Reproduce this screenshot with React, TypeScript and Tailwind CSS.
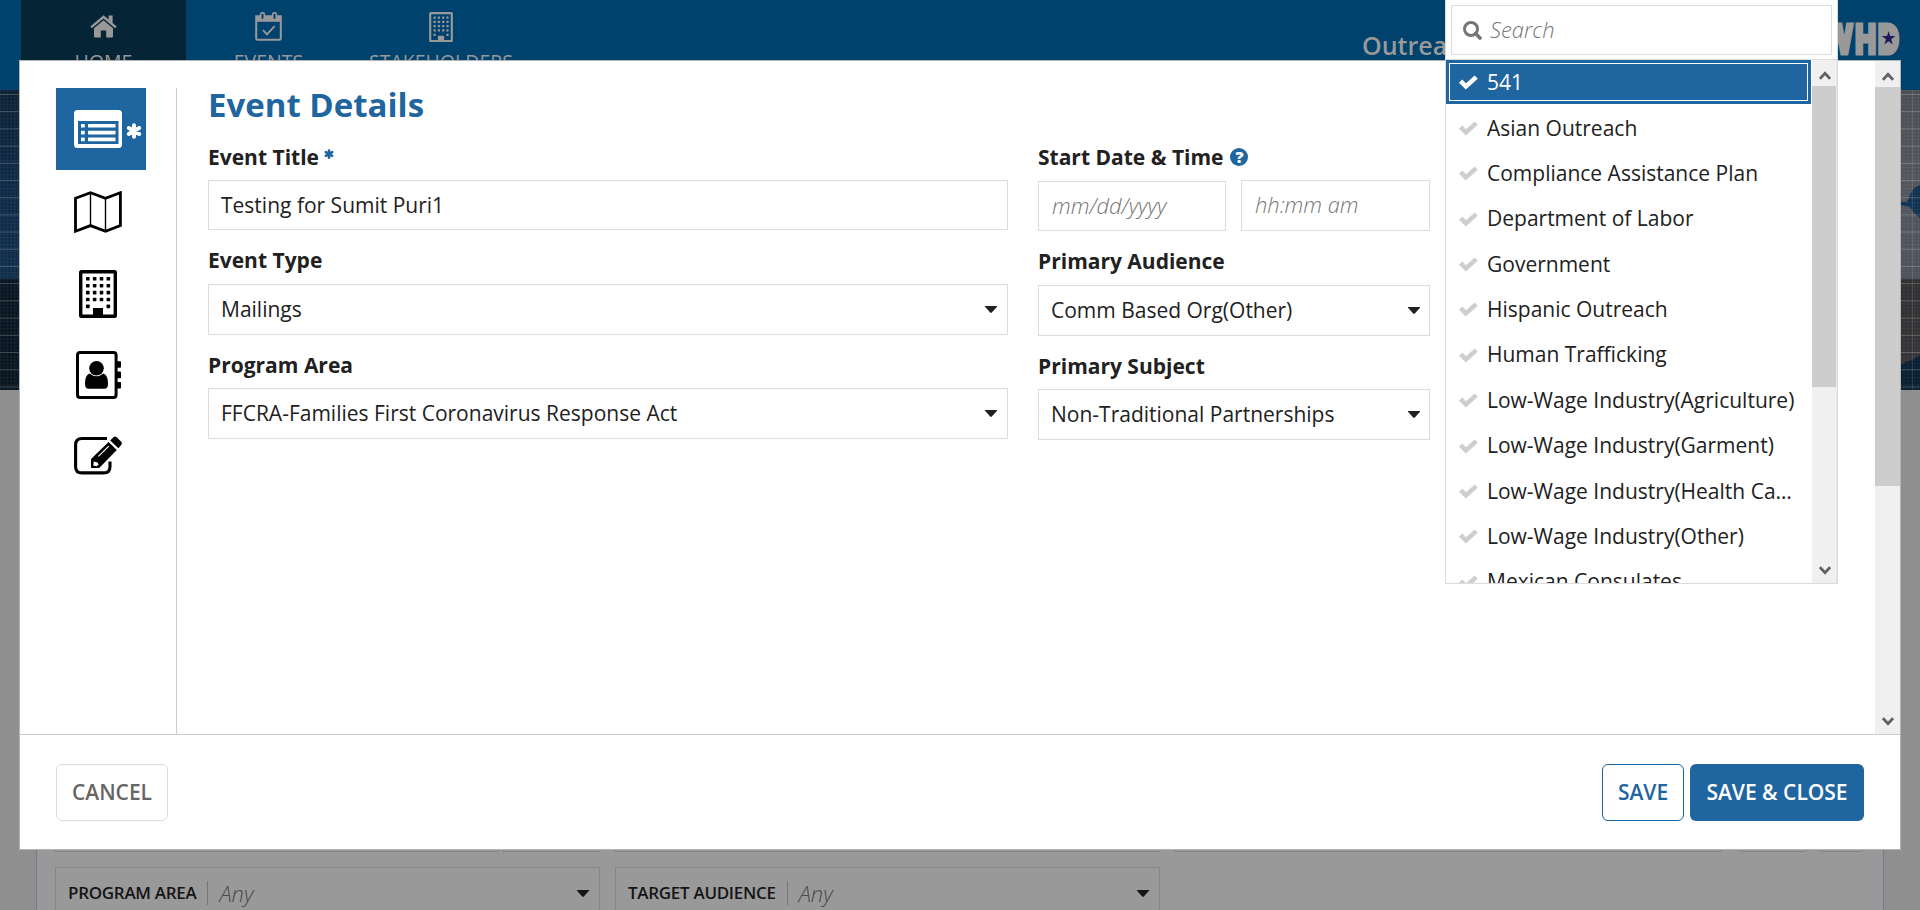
import React from "react";

const options = [
  "541",
  "Asian Outreach",
  "Compliance Assistance Plan",
  "Department of Labor",
  "Government",
  "Hispanic Outreach",
  "Human Trafficking",
  "Low-Wage Industry(Agriculture)",
  "Low-Wage Industry(Garment)",
  "Low-Wage Industry(Health Care)",
  "Low-Wage Industry(Other)",
  "Mexican Consulates",
];

function BuildingIcon({ className }: { className: string }) {
  const dots: React.ReactNode[] = [];
  for (let r = 0; r < 5; r++) {
    for (let c = 0; c < 4; c++) {
      if (r === 4 && (c === 1 || c === 2)) continue;
      dots.push(<rect key={`${r}-${c}`} x={7 + c * 6.85} y={7 + r * 6.9} width="3.6" height="3.6" rx="0.7" />);
    }
  }
  return (
    <svg viewBox="0 0 38 48" className={className} fill="currentColor">
      <rect x="1.7" y="1.7" width="34.6" height="44.6" rx="0.8" fill="none" stroke="currentColor" strokeWidth="3.4" />
      {dots}
      <rect x="14" y="38" width="10" height="9" />
    </svg>
  );
}

function HomeIcon() {
  return (
    <svg viewBox="0 0 27 23" className="h-[23px] w-[27px]" fill="currentColor">
      <path d="M13.5 0.2 0.3 11.4 1.9 13.2 13.5 3.6 25.1 13.2 26.7 11.4 22.6 7.9V0.6H18.6V4.5Z" />
      <path d="M13.5 5.3 4 13.2V21.2Q4 22.4 5.2 22.4H10.8V15.4H16.2V22.4H21.8Q23 22.4 23 21.2V13.2Z" />
    </svg>
  );
}

function CalendarIcon() {
  return (
    <svg viewBox="0 0 27 29" className="h-[29px] w-[27px]" fill="none" stroke="currentColor">
      <path d="M1.2 4.2H25.8V26.6Q25.8 27.8 24.6 27.8H2.4Q1.2 27.8 1.2 26.6Z" strokeWidth="2" />
      <path d="M1.2 4.2H25.8V9.8H1.2Z" fill="currentColor" stroke="none" />
      <rect x="5.7" y="0.9" width="3.6" height="6.8" rx="1.6" strokeWidth="1.6" fill="#00426e" />
      <rect x="17.7" y="0.9" width="3.6" height="6.8" rx="1.6" strokeWidth="1.6" fill="#00426e" />
      <path d="M8 18.2 12 22.4 19.6 14.2" strokeWidth="1.8" />
    </svg>
  );
}

function ListIcon() {
  return (
    <svg viewBox="0 0 48 38" className="h-[38px] w-[48px]" fill="currentColor">
      <path
        fillRule="evenodd"
        d="M3.5 0H44.5Q48 0 48 3.5V34.5Q48 38 44.5 38H3.5Q0 38 0 34.5V3.5Q0 0 3.5 0ZM4 11V34H44.5V11Z"
      />
      {[14, 20.8, 27.6].map((y) => (
        <g key={y}>
          <rect x="7" y={y} width="3.8" height="3.6" rx="0.6" />
          <rect x="14" y={y} width="27.5" height="3.6" rx="0.4" />
        </g>
      ))}
    </svg>
  );
}

function Asterisk({ className }: { className: string }) {
  return (
    <svg viewBox="0 0 16 16" className={className} stroke="currentColor" strokeWidth="4" strokeLinecap="round">
      <path d="M8 2.2V13.8M2.8 5 13.2 11M13.2 5 2.8 11" />
    </svg>
  );
}

function MapIcon() {
  return (
    <svg viewBox="0 0 48 42" className="h-[42px] w-[48px]" fill="none" stroke="currentColor">
      <path d="M1.5 7.2 16.5 1.7 31.5 7.2 46.4 1.7V34.6L31.5 40.2 16.5 34.6 1.5 40.2Z" strokeWidth="2.8" />
      <path d="M16.5 2V35M31.5 7V40" strokeWidth="1.4" />
    </svg>
  );
}

function ContactIcon() {
  return (
    <svg viewBox="0 0 46 48" className="h-[48px] w-[46px]" fill="currentColor">
      <rect x="1.5" y="1.5" width="38.6" height="45" rx="2.6" fill="none" stroke="currentColor" strokeWidth="3" />
      <rect x="40" y="10.2" width="5" height="6.6" rx="0.8" />
      <rect x="40" y="20.6" width="5" height="6.6" rx="0.8" />
      <rect x="40" y="31" width="5" height="6.6" rx="0.8" />
      <circle cx="20.5" cy="17.3" r="7.3" />
      <path d="M13.5 22.6Q20.5 28 27.5 22.6 32 24.5 32 32.5 32 37.8 28.5 37.8H12.5Q9 37.8 9 32.5 9 24.5 13.5 22.6Z" />
    </svg>
  );
}

function EditIcon() {
  return (
    <svg viewBox="0 0 48 39" className="h-[39px] w-[48px]" fill="currentColor">
      <path
        d="M33 2.5H8Q1.6 2.5 1.6 9V30.4Q1.6 36.9 8 36.9H29.5Q36 36.9 36 30.4V25.5"
        fill="none"
        stroke="currentColor"
        strokeWidth="3.1"
      />
      <path
        fillRule="evenodd"
        d="M17 32V23L34.6 6 42.8 14 25.2 32ZM19.8 25.4 19.2 29.4 22.4 30.2 24.6 28.8 23.6 26.6 21.6 26ZM24.8 20.8 35.2 10.6 34.4 9.8 24 20Z"
      />
      <path d="M36.2 4.6 39.2 1.4Q40.8-0.2 42.6 1.2L47 5.4Q48.6 7.2 47.2 9L44.4 12.2Z" />
    </svg>
  );
}

function Check({ className }: { className: string }) {
  return (
    <svg viewBox="0 0 19 15" className={"h-[15px] w-[19px] shrink-0 " + className} fill="none" stroke="currentColor">
      <path d="M1.6 6.2 6.9 11.4 17.2 2.1" strokeWidth="4.6" />
    </svg>
  );
}

function Caret({ className = "" }: { className?: string }) {
  return (
    <svg viewBox="0 0 12 7" className={"h-[7px] w-[12px] shrink-0 " + className} fill="currentColor">
      <path d="M0 0H12V0.8L6.6 6.7H5.4L0 0.8Z" />
    </svg>
  );
}

function Chevron({ down = false }: { down?: boolean }) {
  return (
    <svg viewBox="0 0 12 9" className="h-[9px] w-[12px]" fill="none" stroke="#606060" strokeWidth="2.8">
      {down ? <path d="M0.9 1.2 6 6.6 11.1 1.2" /> : <path d="M0.9 7.8 6 2.4 11.1 7.8" />}
    </svg>
  );
}

function Select({ value, className }: { value: string; className: string }) {
  return (
    <div className={"flex items-center justify-between border border-[#dcdcdc] pl-3 " + className}>
      <span>{value}</span>
      <Caret />
    </div>
  );
}

function Label({ children, className = "h-[38px]" }: { children: React.ReactNode; className?: string }) {
  return <div className={"flex font-bold leading-[30px] text-[#212121] " + className}>{children}</div>;
}

function Filter({ label }: { label: string }) {
  return (
    <div className="flex h-[52px] w-[545px] shrink-0 items-center border border-[#868686] pl-3 pr-[10px] text-[#151515]">
      <span className="text-[17px] font-semibold tracking-[-0.3px]">{label}</span>
      <span className="ml-[11px] h-[24px] border-l border-[#777]" />
      <span className="ml-[11px] text-[22px] font-light italic text-[#4a4a4a]">Any</span>
      <Caret className="ml-auto" />
    </div>
  );
}

function Backdrop() {
  return (
    <div className="flex h-[910px] w-full flex-col overflow-hidden bg-[#8f8f8f]">
      <header className="flex h-[90px] shrink-0 bg-[#00426e] pl-[21px] text-[19.5px] text-[#999]">
        <div className="flex w-[165px] flex-col items-center bg-[#052435] pt-[15px]">
          <HomeIcon />
          <span className="mt-[10px] leading-[28px]">HOME</span>
        </div>
        <div className="flex w-[165px] flex-col items-center pt-3">
          <CalendarIcon />
          <span className="mt-[7px] leading-[28px]">EVENTS</span>
        </div>
        <div className="flex w-[180px] flex-col items-center pt-3">
          <BuildingIcon className="h-[30px] w-[24px]" />
          <span className="mt-[6px] leading-[28px]">STAKEHOLDERS</span>
        </div>
        <div className="ml-auto flex pr-5 pt-[21px]">
          <span className="w-[467px] whitespace-nowrap pt-2 text-[25px] font-semibold leading-[33px]">Outreach</span>
          <svg viewBox="0 0 71 36" className="h-[36px] w-[71px]">
            <text
              transform="scale(0.7 1)"
              x="-6 37.5 70"
              y="32"
              fill="#999"
              stroke="#999"
              strokeWidth="5"
              fontFamily="Liberation Sans, sans-serif"
              fontWeight="700"
              fontSize="41"
            >
              WHD
            </text>
            <rect x="54" y="6" width="11" height="23" fill="#999" />
            <path
              d="M59.6 10.2 61.2 15.1 66.4 15.1 62.2 18.2 63.8 23.4 59.6 20.3 55.4 23.4 57 18.2 52.8 15.1 58 15.1Z"
              fill="#1f1b5c"
            />
          </svg>
        </div>
      </header>
      <div className="flex h-[300px] shrink-0 justify-between bg-[#12304c]">
        <svg className="h-[300px] w-[20px]" viewBox="0 0 20 300">
          <defs>
            <linearGradient id="navy" x1="0" y1="0" x2="0" y2="1">
              <stop offset="0" stopColor="#0a1f33" />
              <stop offset="0.3" stopColor="#0b2744" />
              <stop offset="0.63" stopColor="#0d2c4a" />
              <stop offset="0.631" stopColor="#061420" />
              <stop offset="1" stopColor="#06121d" />
            </linearGradient>
            <pattern id="fine" width="3.5" height="3.5" patternUnits="userSpaceOnUse">
              <path d="M0 0.5H3.5M0.5 0V3.5" stroke="#ffffff" strokeOpacity="0.06" />
            </pattern>
            <pattern id="coarse" width="60" height="17.2" y="4" patternUnits="userSpaceOnUse">
              <path d="M0 0.5H60" stroke="#ffffff" strokeOpacity="0.2" />
            </pattern>
          </defs>
          <rect width="20" height="300" fill="url(#navy)" />
          <rect width="20" height="300" fill="url(#fine)" />
          <rect width="20" height="300" fill="url(#coarse)" />
        </svg>
        <svg className="h-[300px] w-[20px]" viewBox="0 0 20 300">
          <defs>
            <linearGradient id="steel" x1="0" y1="0" x2="0" y2="1">
              <stop offset="0" stopColor="#484c52" />
              <stop offset="0.3" stopColor="#50535a" />
              <stop offset="0.63" stopColor="#4a4f5a" />
              <stop offset="0.631" stopColor="#2d2d2f" />
              <stop offset="1" stopColor="#343436" />
            </linearGradient>
          </defs>
          <rect width="20" height="300" fill="url(#steel)" />
          <path d="M0 112 7 112 10 105 14 98 20 95V128L14 123 10 117 0 115Z" fill="#0d2f4e" />
          <path d="M0 275 6 272 12 270 20 265V300H0Z" fill="#071c30" />
          <rect width="20" height="300" fill="url(#fine)" />
          <rect width="20" height="300" fill="url(#coarse)" />
          <path d="M12.5 0V300" stroke="#fff" strokeOpacity="0.12" />
        </svg>
      </div>
      <div className="mx-auto flex min-h-0 w-[1848px] grow flex-col border-x border-[#6c7f94] bg-[#999] px-[18px] pt-[432px]">
        <div className="flex h-[30px] shrink-0">
          <div className="h-full w-[444px] border border-[#868686]" />
          <div className="ml-1 h-full w-[97px] border border-[#868686]" />
          <div className="ml-[15px] h-full w-[545px] border border-[#868686]" />
          <div className="ml-[15px] h-full w-[546px] border border-[#868686]" />
          <div className="ml-[16px] h-full w-[72px] rounded-[5px] border border-[#868686]" />
          <div className="ml-[8px] h-full w-[48px] rounded-[5px] border border-[#868686]" />
        </div>
        <div className="mt-[15px] flex gap-[15px]">
          <Filter label="PROGRAM AREA" />
          <Filter label="TARGET AUDIENCE" />
        </div>
      </div>
    </div>
  );
}

function SideTabs() {
  return (
    <nav className="mt-[27px] flex w-[157px] shrink-0 flex-col border-r border-[#ccc] pl-9 text-black">
      <div className="flex h-[82px] w-[90px] items-center bg-[#1f659f] pl-[18px] text-white">
        <ListIcon />
        <Asterisk className="ml-[4px] mt-[3px] h-[16px] w-[16px]" />
      </div>
      <div className="flex w-[84px] flex-col items-center">
        <div className="mt-[21px]">
          <MapIcon />
        </div>
        <BuildingIcon className="mt-[37px] h-[48px] w-[38px]" />
        <div className="mt-[33px] pl-[2px]">
          <ContactIcon />
        </div>
        <div className="mt-[37px]">
          <EditIcon />
        </div>
      </div>
    </nav>
  );
}

function Modal() {
  return (
    <div className="absolute left-[19px] top-[60px] flex h-[790px] w-[1882px] flex-col border border-[#b5b5b5] bg-white">
      <div className="flex h-[673px] text-[21px] text-[#212121]">
        <SideTabs />
        <div className="flex grow flex-col pl-[31px] pt-[24px]">
          <h1 className="h-[57px] text-[33px] font-bold leading-[39px] text-[#1f659f]">Event Details</h1>
          <div className="flex gap-[30px]">
            <div className="w-[800px]">
              <Label>
                Event Title
                <Asterisk className="ml-[5px] mt-[7px] h-[10px] w-[10px] text-[#1f659f]" />
              </Label>
              <div className="flex h-[50px] items-center border border-[#dcdcdc] pl-3 pt-px">Testing for Sumit Puri1</div>
              <Label className="mt-[15px] h-[39px]">Event Type</Label>
              <Select value="Mailings" className="h-[51px] pr-[10px]" />
              <Label className="mt-[15px] h-[38px]">Program Area</Label>
              <Select value="FFCRA-Families First Coronavirus Response Act" className="h-[51px] pr-[10px]" />
            </div>
            <div className="w-[392px]">
              <Label>
                Start Date &amp; Time
                <span className="ml-[7px] mt-[6px] flex h-[18px] w-[18px] items-center justify-center rounded-full bg-[#1f659f] text-[16px] font-extrabold leading-[18px] text-white">
                  ?
                </span>
              </Label>
              <div className="flex h-[51px] items-end justify-between text-[21.9px] font-light italic text-[#757575]">
                <div className="flex h-[50px] w-[188px] items-center border border-[#dcdcdc] pl-[13px]">mm/dd/yyyy</div>
                <div className="flex h-[51px] w-[189px] items-center border border-[#dcdcdc] pl-[13px]">hh:mm am</div>
              </div>
              <Label className="mt-[15px] h-[39px]">Primary Audience</Label>
              <Select value="Comm Based Org(Other)" className="h-[51px] pr-[9px]" />
              <Label className="mt-[15px] h-[38px]">Primary Subject</Label>
              <Select value="Non-Traditional Partnerships" className="h-[51px] pr-[9px]" />
            </div>
          </div>
        </div>
        <div className="flex w-[25px] flex-col items-center bg-[#f0f0f0]">
          <div className="flex h-[26px] items-center pt-1">
            <Chevron />
          </div>
          <div className="h-[399px] w-full bg-[#cdcdcd]" />
          <div className="mt-auto flex h-[26px] items-center">
            <Chevron down />
          </div>
        </div>
      </div>
      <footer className="flex grow items-center border-t border-[#ccc] px-9 pt-px text-[21px] font-semibold">
        <div className="flex h-[57px] w-[112px] items-center justify-center rounded-[6px] border border-[#dcdcdc] text-[#666]">
          CANCEL
        </div>
        <div className="ml-auto flex h-[57px] w-[82px] items-center justify-center rounded-[6px] border border-[#1f659f] text-[#1f659f]">
          SAVE
        </div>
        <div className="ml-[6px] flex h-[57px] w-[174px] items-center justify-center rounded-[6px] bg-[#1f659f] text-white">
          SAVE &amp; CLOSE
        </div>
      </footer>
    </div>
  );
}

function Dropdown() {
  return (
    <div className="absolute left-[1445px] top-0 flex h-[584px] w-[393px] flex-col overflow-hidden border border-t-0 border-[#dcdcdc] bg-white text-[21px] text-[#212121]">
      <div className="h-[60px] shrink-0 border-b border-[#dcdcdc] px-[5px] pt-[5px]">
        <div className="flex h-[50px] items-center border border-[#dcdcdc] pl-[11px] pt-px">
          <svg viewBox="0 0 19 19" className="h-[19px] w-[19px]" fill="none" stroke="#757575">
            <circle cx="8" cy="8" r="6.5" strokeWidth="3" />
            <path d="M12.6 12.6 17 17" strokeWidth="3.6" strokeLinecap="round" />
          </svg>
          <span className="ml-[8px] text-[21.9px] font-light italic text-[#757575]">Search</span>
        </div>
      </div>
      <div className="flex h-[523px]">
        <div className="w-[365px] overflow-hidden">
          <div className="h-[44px] bg-[#1f659f] p-[3px]">
            <div className="flex h-[38px] items-center border border-white pl-[9px] pt-px text-white">
              <Check className="" />
              <span className="ml-[9px]">{options[0]}</span>
            </div>
          </div>
          <div className="pt-[1.6px]">
            {options.slice(1).map((name) => (
              <div key={name} className="flex h-[45.4px] items-center pl-[13px] pr-[20px]">
                <Check className="text-[#cecece]" />
                <span className="ml-[9px] w-[311px] shrink-0 truncate">{name}</span>
              </div>
            ))}
          </div>
        </div>
        <div className="ml-px flex w-[25px] flex-col items-center border-r border-[#e6e6e6] bg-[#f0f0f0]">
          <div className="flex h-[26px] items-center pl-px pt-1">
            <Chevron />
          </div>
          <div className="h-[301px] w-full bg-[#cdcdcd]" />
          <div className="mt-auto flex h-[26px] items-center pl-px">
            <Chevron down />
          </div>
        </div>
      </div>
    </div>
  );
}

export default function App() {
  return (
    <div className="relative h-[910px] w-full overflow-hidden font-['Open_Sans','Noto_Sans',sans-serif]">
      <Backdrop />
      <Modal />
      <Dropdown />
    </div>
  );
}
